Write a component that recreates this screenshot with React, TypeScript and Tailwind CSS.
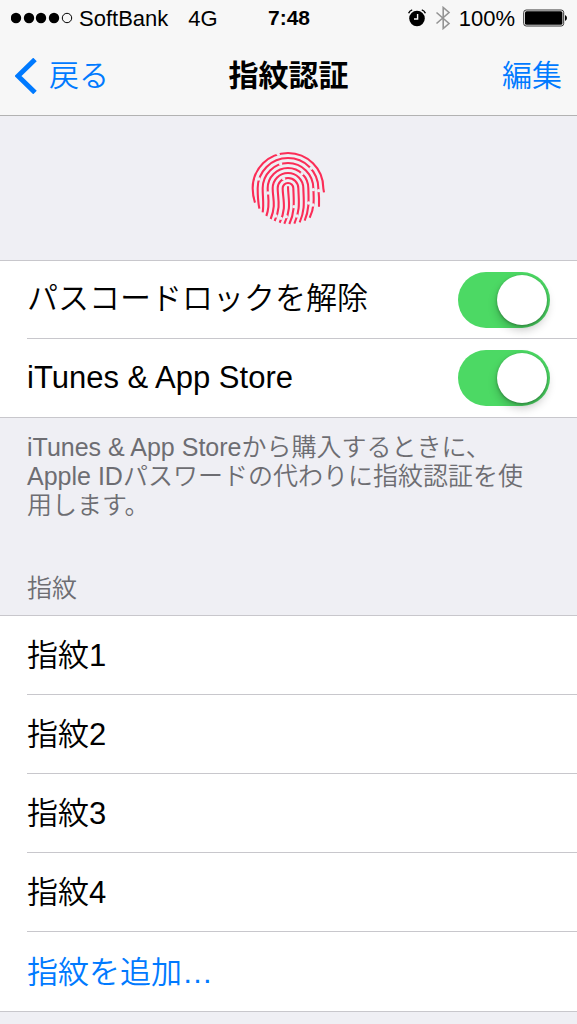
import { useState } from "react";
import clsx from "clsx";

interface ToggleRow {
  id: string;
  label: string;
}

const TOGGLES: ToggleRow[] = [
  { id: "unlock", label: "パスコードロックを解除" },
  { id: "store", label: "iTunes & App Store" },
];

const FINGERPRINTS = ["指紋1", "指紋2", "指紋3", "指紋4"];

// outermost ridge first, the core last
const RIDGES = [
  "M33 173Q26 152 26 130A106 106 0 0 1 238 130L240 142",
  "M46 191Q41 165 41 130A91 91 0 0 1 223 130Q226 158 225 185",
  "M56 202C60 180 56 155 56 130A76 76 0 0 1 208 130C210 165 211 190 197 218",
  "M67 213C80 180 71 155 71 130A61 61 0 0 1 193 130C194 165 196 195 182 227",
  "M80 222C97 180 86 160 86 130A46 46 0 0 1 178 130C179 165 184 195 167 232",
  "M92 228C112 185 101 160 101 130A31 31 0 0 1 163 130C164 165 170 195 151 236",
  "M107 233C129 190 116 160 116 130A16 16 0 0 1 148 130C149 165 154 200 136 237",
  "M121 236C144 190 132 160 132 124",
];

// breaks in the ridges
const GAPS = [
  [103, 28], [45, 102], [201, 70], [110, 57], [208, 134], [224, 137], [72, 144], [174, 86],
  [194, 174], [119, 101], [150, 185], [207, 180], [96, 213], [111, 220], [127, 215], [159, 213],
];

function SignalDots() {
  return (
    <svg className="h-5 w-16" viewBox="0 0 64 20" aria-hidden="true">
      {[5, 18, 30, 43].map((x) => (
        <circle key={x} cx={x} cy="10" r="5.2" />
      ))}
      <circle cx="56" cy="10" r="4.7" fill="none" stroke="black" strokeWidth="1" />
    </svg>
  );
}

function AlarmIcon() {
  return (
    <svg className="h-5 w-5" viewBox="0 0 20 20" fill="none" aria-hidden="true">
      <circle cx="10" cy="10.5" r="7.8" fill="black" />
      <path d="M10.6 6v5H7" stroke="#f7f7f7" strokeWidth="1.4" />
      <path d="M1.6 5.2Q2.6 2.6 5.2 1.8M18.4 5.2Q17.4 2.6 14.8 1.8" stroke="black" strokeWidth="1.4" />
    </svg>
  );
}

function BluetoothIcon() {
  return (
    <svg className="h-6 w-4" viewBox="0 0 16 24" fill="none" aria-hidden="true">
      <path d="M1.5 6.5 14 17.5 8.2 22.5V1.5L14 6.5 1.5 17.5" stroke="#949494" strokeWidth="1.6" />
    </svg>
  );
}

function BatteryIcon() {
  return (
    <svg className="h-5 w-11" viewBox="0 0 44 20" aria-hidden="true">
      <rect x="0.7" y="2" width="40" height="16" rx="2.5" fill="none" stroke="#333" strokeWidth="1" />
      <rect x="2" y="3.3" width="37.4" height="13.4" rx="1.5" />
      <path d="M42 7q2 .8 2 3t-2 3z" />
    </svg>
  );
}

function FingerprintIcon() {
  return (
    <svg className="h-[86px] w-[90px]" viewBox="0 0 270 258" fill="none" aria-hidden="true">
      {RIDGES.map((d) => (
        <path key={d} d={d} stroke="#fb2d57" strokeWidth="6.3" />
      ))}
      {GAPS.map(([x, y]) => (
        <circle key={`${x}-${y}`} cx={x} cy={y} r="5" fill="#efeff4" />
      ))}
    </svg>
  );
}

function Switch({ id, checked, onChange }: { id: string; checked: boolean; onChange: () => void }) {
  return (
    <input
      id={id}
      type="checkbox"
      role="switch"
      checked={checked}
      onChange={onChange}
      className={clsx(
        "h-14 w-[92px] shrink-0 cursor-pointer appearance-none rounded-full p-[3px] transition-colors",
        "before:block before:size-[50px] before:rounded-full before:bg-white before:shadow-[0_5px_10px_rgba(0,0,0,0.22),0_1px_3px_rgba(0,0,0,0.3)] before:transition-transform",
        checked ? "bg-[#4cd964] before:translate-x-9" : "bg-[#e5e5e5]"
      )}
    />
  );
}

export default function App() {
  const [enabled, setEnabled] = useState<Record<string, boolean>>({ unlock: true, store: true });

  function handleToggle(id: string) {
    setEnabled((prev) => ({ ...prev, [id]: !prev[id] }));
  }

  return (
    <div
      lang="ja"
      className="min-h-screen bg-[#efeff4] font-['Liberation_Sans','Noto_Sans_CJK_JP',sans-serif] font-[350] text-black"
    >
      <header className="border-b border-[#b2b2b2] bg-[#f7f7f7]">
        <div className="grid h-9 grid-cols-[1fr_auto_1fr] items-center pr-[10px] pl-[11px] text-[22px]">
          <div className="flex items-center gap-1">
            <SignalDots />
            <span>SoftBank</span>
            <span className="ml-4">4G</span>
          </div>
          <span className="text-[21px] font-bold">7:48</span>
          <div className="flex items-center justify-end gap-2">
            <AlarmIcon />
            <BluetoothIcon />
            <span>100%</span>
            <BatteryIcon />
          </div>
        </div>
        <div className="grid h-[79px] grid-cols-[1fr_auto_1fr] items-center px-[15px] text-[30px]">
          <button className="flex items-center gap-3 justify-self-start text-[#007aff]">
            <svg className="h-9 w-[22px]" viewBox="0 0 22 36" fill="none" aria-hidden="true">
              <path d="M20 1.5 3 18 20 34.5" stroke="currentColor" strokeWidth="5" />
            </svg>
            戻る
          </button>
          <h1 className="font-bold">指紋認証</h1>
          <button className="justify-self-end text-[#007aff]">編集</button>
        </div>
      </header>

      <div className="flex h-36 items-center justify-center">
        <FingerprintIcon />
      </div>

      <section className="border-y border-[#c8c7cc] bg-white pl-[27px]">
        {TOGGLES.map(({ id, label }, i) => (
          <div
            key={id}
            className={clsx("flex items-center justify-between pr-[27px]", i > 0 ? "h-[79px] border-t border-[#c8c7cc]" : "h-[77px]")}
          >
            <label htmlFor={id} className="text-[31px]">{label}</label>
            <Switch id={id} checked={enabled[id]} onChange={() => handleToggle(id)} />
          </div>
        ))}
      </section>

      <p className="pt-[15px] pr-10 pl-[27px] text-[25px] leading-[29px] text-[#6d6d72]">
        iTunes & App Storeから購入するときに、Apple IDパスワードの代わりに指紋認証を使用します。
      </p>

      <h2 className="px-[27px] pt-[54px] pb-3 text-[25px] leading-[29px] text-[#6d6d72]">指紋</h2>
      <section className="border-y border-[#c8c7cc] bg-white pl-[27px] text-[31px]">
        <ul className="divide-y divide-[#c8c7cc]">
          {FINGERPRINTS.map((name) => (
            <li key={name} className="box-content flex h-[76px] items-center pt-0.5">{name}</li>
          ))}
          <li className="box-content flex h-[76px] items-center pt-[3px]">
            <button className="text-[#007aff]">指紋を追加…</button>
          </li>
        </ul>
      </section>
    </div>
  );
}
